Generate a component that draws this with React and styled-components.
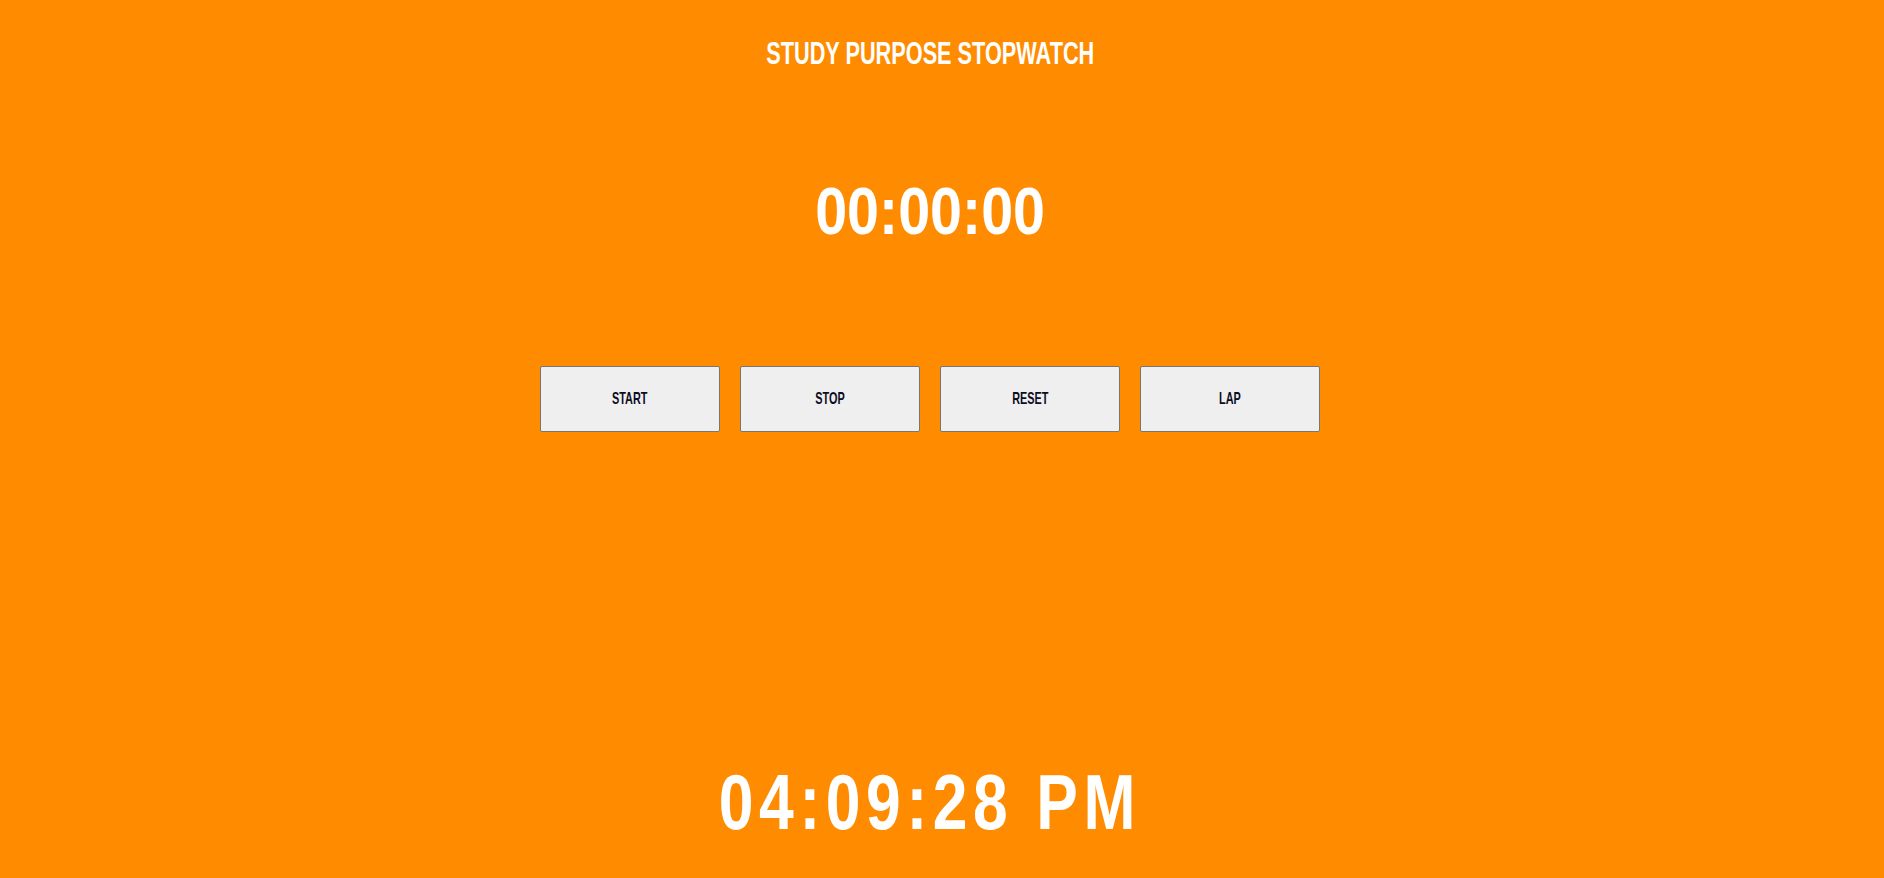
import React, { useState, useEffect, useRef } from 'react'
import styled, { createGlobalStyle } from 'styled-components'

const GlobalStyle = createGlobalStyle`
  html, body {
    margin: 0;
    padding: 0;
    background: #ff8c00;
  }
  body {
    font-family: "Liberation Sans", Arial, sans-serif;
  }
`

const Page = styled.div`
  width: 1860px;
  min-height: 878px;
  display: flex;
  flex-direction: column;
  align-items: center;
  color: #fff;
`

// condensed look of the original display face
const Narrow = styled.span`
  display: inline-block;
  white-space: nowrap;
  transform: scaleX(${p => p.$k});
  transform-origin: center;
`

const Title = styled.h1`
  margin: 38px 0 0;
  font-size: 31px;
  line-height: 1;
  font-weight: 700;
  text-transform: uppercase;
`

const Display = styled.div`
  margin-top: 109px;
  font-size: 66px;
  line-height: 1;
  font-weight: 700;
`

const Controls = styled.div`
  margin-top: 122px;
  display: flex;
  gap: 20px;
`

const Button = styled.button`
  width: 180px;
  height: 66px;
  padding: 0;
  background: #efefef;
  border: 1px solid #767676;
  border-radius: 2px;
  color: #0d0d1f;
  font-family: inherit;
  font-size: 17px;
  font-weight: 700;
  cursor: pointer;
`

const Clock = styled.div`
  margin-top: 331px;
  font-size: 78px;
  line-height: 1;
  font-weight: 700;
  letter-spacing: 7px;
`

const pad = n => String(n).padStart(2, '0')

const format = ms => {
  const s = Math.floor(ms / 1000)
  return `${pad(Math.floor(s / 3600))}:${pad(Math.floor(s / 60) % 60)}:${pad(s % 60)}`
}

const App = () => {
  const [elapsed, setElapsed] = useState(0)
  const [running, setRunning] = useState(false)
  const started = useRef(0)

  useEffect(() => {
    if (!running) return
    started.current = Date.now() - elapsed
    const id = setInterval(() => setElapsed(Date.now() - started.current), 250)
    return () => clearInterval(id)
  }, [running])

  const buttons = [
    ['START', () => setRunning(true)],
    ['STOP', () => setRunning(false)],
    ['RESET', () => { setRunning(false); setElapsed(0) }],
    ['LAP', () => {}],
  ]

  return (
    <>
      <GlobalStyle />
      <Page>
        <Title><Narrow $k={0.7}>Study Purpose Stopwatch</Narrow></Title>
        <Display><Narrow $k={0.87}>{format(elapsed)}</Narrow></Display>
        <Controls>
          {buttons.map(([label, onClick]) => (
            <Button key={label} onClick={onClick}>
              <Narrow $k={0.64}>{label}</Narrow>
            </Button>
          ))}
        </Controls>
        <Clock><Narrow $k={0.8}>04:09:28 PM</Narrow></Clock>
      </Page>
    </>
  )
}

export default App
